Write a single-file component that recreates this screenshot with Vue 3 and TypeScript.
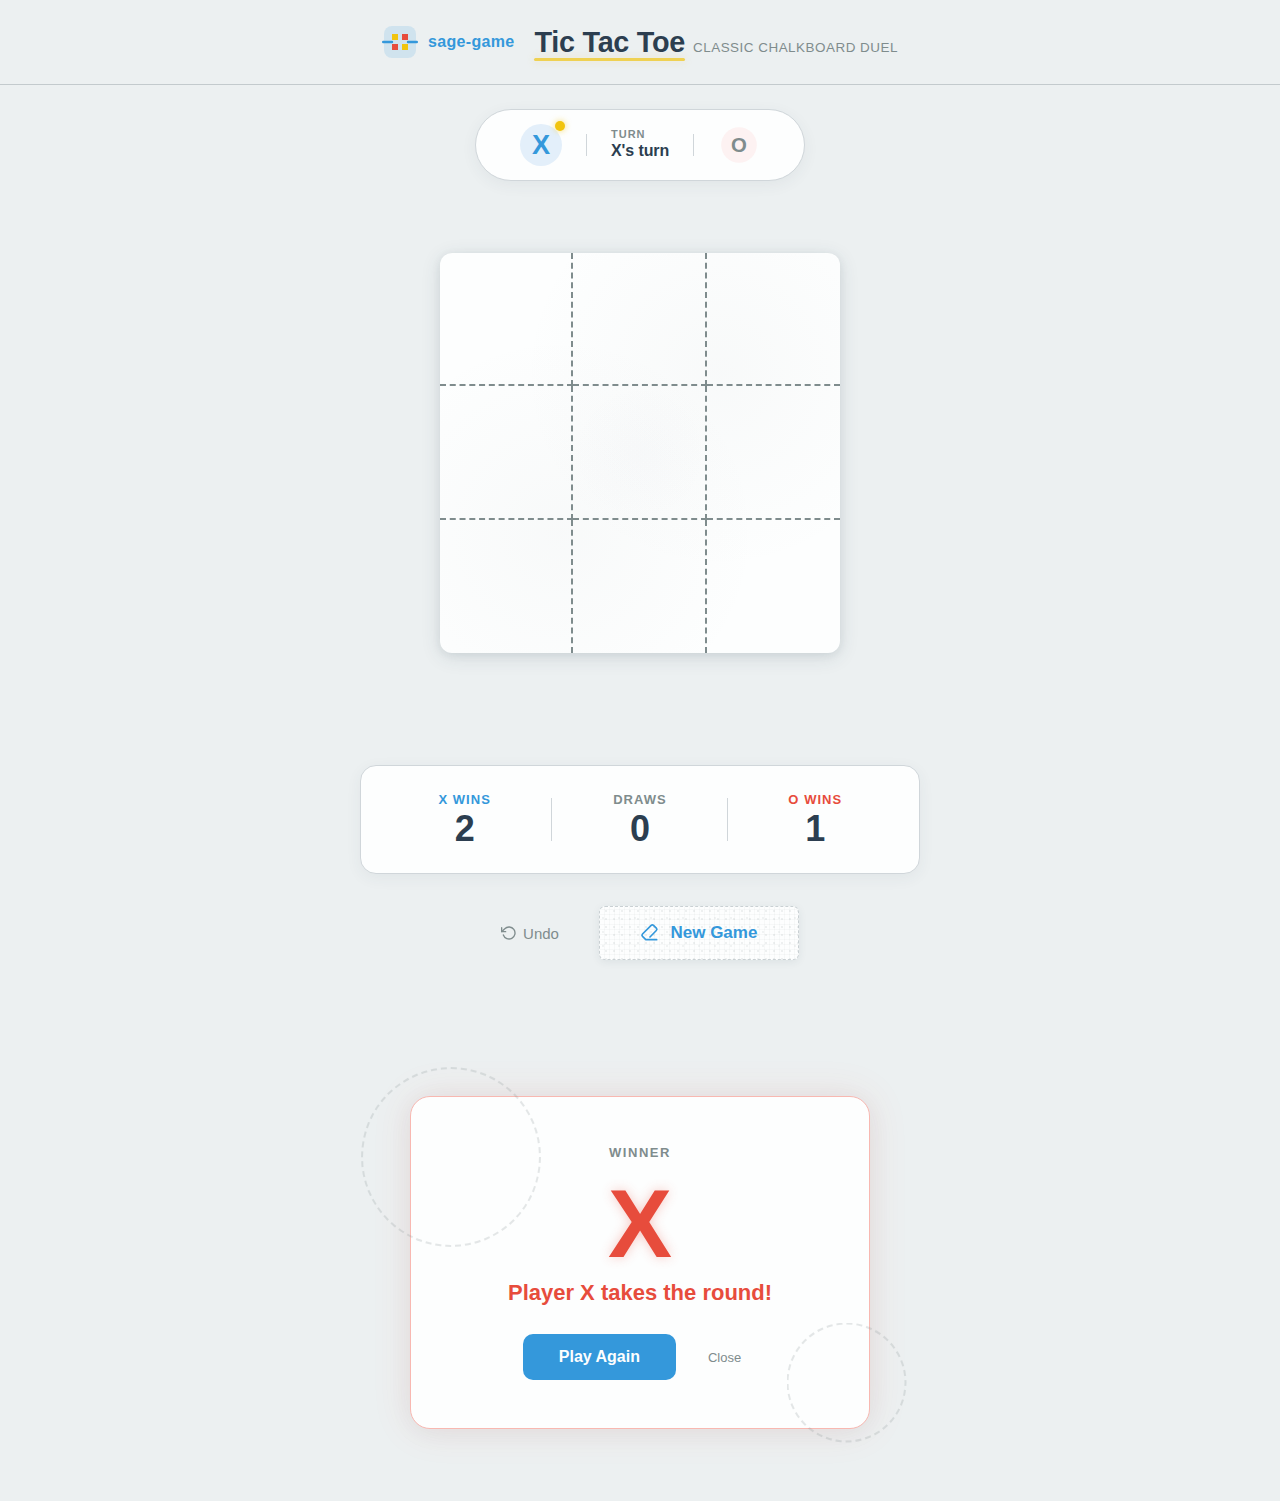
<template>
  <div class="page">
    <header class="header">
      <div class="brand">
        <svg class="brand__logo" viewBox="0 0 36 36" fill="none">
          <rect x="2" y="2" width="32" height="32" rx="8" fill="#3498db" fill-opacity="0.15" />
          <path d="M10 10h6v6h-6zM20 20h6v6h-6z" fill="#f1c40f" />
          <path d="M20 10h6v6h-6zM10 20h6v6h-6z" fill="#e74c3c" />
          <path d="M1.2 18H10M26 18h8.8" stroke="#3498db" stroke-width="2.4" stroke-linecap="round" />
        </svg>
        <span class="brand__name">sage-game</span>
      </div>
      <div class="heading">
        <h1 class="heading__title">Tic Tac Toe</h1>
        <span class="heading__sub">Classic chalkboard duel</span>
      </div>
    </header>

    <main class="main">
      <section class="turn">
        <div :class="['turn__mark', 'turn__mark--x', { 'turn__mark--active': current === 'X' }]">X</div>
        <span class="turn__divider"></span>
        <div class="turn__info">
          <span class="turn__label">Turn</span>
          <span class="turn__text">{{ current }}'s turn</span>
        </div>
        <span class="turn__divider"></span>
        <div :class="['turn__mark', 'turn__mark--o', { 'turn__mark--active': current === 'O' }]">O</div>
      </section>

      <section class="board">
        <button
          v-for="(cell, index) in cells"
          :key="index"
          :class="['board__cell', { [`board__cell--${cell.toLowerCase()}`]: cell }]"
          @click="play(index)"
        >
          {{ cell }}
        </button>
      </section>

      <section class="score">
        <div v-for="item in scores" :key="item.id" :class="['score__item', `score__item--${item.id}`]">
          <span class="score__label">{{ item.label }}</span>
          <span class="score__value">{{ item.value }}</span>
        </div>
      </section>

      <div class="actions">
        <button class="undo" @click="undo">
          <svg class="undo__icon" viewBox="0 0 24 24">
            <path d="M1 4v6h6" />
            <path d="M3.51 15a9 9 0 1 0 2.13-9.36L1 10" />
          </svg>
          Undo
        </button>
        <button class="new-game" @click="reset">
          <svg class="new-game__icon" viewBox="0 0 24 24">
            <path d="M20 20H7L3 16a2 2 0 0 1 0-2.8L13.4 2.8a2 2 0 0 1 2.8 0L19.6 6.2a2 2 0 0 1 0 2.8L12 16.8" />
          </svg>
          New Game
        </button>
      </div>

      <section v-if="showResult" class="result">
        <span class="result__label">Winner</span>
        <span class="result__mark">X</span>
        <p class="result__text">Player X takes the round!</p>
        <div class="result__actions">
          <button class="result__play" @click="reset">Play Again</button>
          <button class="result__close" @click="showResult = false">Close</button>
        </div>
        <span class="result__ring result__ring--lg"></span>
        <span class="result__ring result__ring--sm"></span>
      </section>
    </main>
  </div>
</template>

<script lang="ts" setup>
import { ref } from 'vue';

type TMark = 'X' | 'O';
type TScore = { id: string; label: string; value: number };

const current = ref<TMark>('X');
const cells = ref<(TMark | '')[]>(Array(9).fill(''));
const moves = ref<number[]>([]);
const showResult = ref(true);

const scores = ref<TScore[]>([
  { id: 'x', label: 'X wins', value: 2 },
  { id: 'draw', label: 'Draws', value: 0 },
  { id: 'o', label: 'O wins', value: 1 }
]);

const swap = () => {
  current.value = current.value === 'X' ? 'O' : 'X';
};

const play = (index: number) => {
  if (!cells.value[index]) {
    cells.value[index] = current.value;
    moves.value.push(index);
    swap();
  }
};

const undo = () => {
  const last = moves.value.pop();
  if (last !== undefined) {
    cells.value[last] = '';
    swap();
  }
};

const reset = () => {
  cells.value = Array(9).fill('');
  moves.value = [];
  current.value = 'X';
};
</script>

<style>
body {
  background-color: #ecf0f1;
}
</style>

<style scoped>
.page {
  min-height: 1501px;
  background-color: #ecf0f1;
  color: #2c3e50;
  font-family: 'Liberation Sans', Arial, sans-serif;
}

button {
  padding: 0;
  border: none;
  background: none;
  font-family: inherit;
  cursor: pointer;
}

/* HEADER */
.header {
  display: flex;
  justify-content: center;
  align-items: center;
  gap: 20px;
  box-sizing: border-box;
  height: 85px;
  border-bottom: 1px solid #c3cacd;
}
.brand {
  display: flex;
  align-items: center;
  gap: 10px;
}
.brand__logo {
  width: 36px;
  height: 36px;
}
.brand__name {
  color: #3498db;
  font-size: 16px;
  font-weight: 700;
  letter-spacing: 0.32px;
}
.heading {
  display: flex;
  align-items: baseline;
  gap: 8px;
}
.heading__title {
  position: relative;
  margin: 0;
  font-size: 28.8px;
  font-weight: 700;
  line-height: 36px;
  letter-spacing: -0.01em;
}
.heading__title::after {
  content: '';
  position: absolute;
  left: -0.5px;
  right: 0;
  bottom: -1px;
  height: 3px;
  border-radius: 2px;
  background-color: #f1c40f;
  box-shadow: 0 0 8px rgba(241, 196, 15, 0.3);
  opacity: 0.7;
}
.heading__sub {
  color: #7f8c8d;
  font-size: 13.44px;
  letter-spacing: 0.5px;
  text-transform: uppercase;
}

.main {
  display: flex;
  flex-direction: column;
  align-items: center;
  padding-top: 24px;
}

/* TURN */
.turn {
  display: flex;
  align-items: center;
  gap: 24px;
  padding: 14px 44px;
  border: 1px solid #d0d6da;
  border-radius: 36px;
  background-color: #fdfefe;
  box-shadow: 0 4px 16px rgba(44, 62, 80, 0.06);
}
.turn__mark {
  position: relative;
  display: flex;
  justify-content: center;
  align-items: center;
  width: 42px;
  height: 42px;
  border-radius: 50%;
  color: #7f8c8d;
  font-size: 24px;
  font-weight: 700;
  transform: scale(0.85);
}
.turn__mark--x {
  background-color: #e3effa;
}
.turn__mark--o {
  background-color: #fdf2f2;
}
.turn__mark--active {
  color: #3498db;
  font-size: 27.2px;
  transform: none;
}
.turn__mark--active::after {
  content: '';
  position: absolute;
  top: -3px;
  right: -3px;
  width: 10px;
  height: 10px;
  border-radius: 50%;
  background-color: #f1c40f;
  box-shadow: 0 0 6px rgba(241, 196, 15, 0.6);
}
.turn__divider {
  width: 1px;
  height: 22px;
  background-color: #d0d6da;
}
.turn__info {
  display: flex;
  flex-direction: column;
  width: 58px;
  padding-bottom: 2px;
  white-space: nowrap;
}
.turn__label {
  color: #7f8c8d;
  font-size: 11px;
  font-weight: 700;
  line-height: 13px;
  letter-spacing: 1px;
  text-transform: uppercase;
}
.turn__text {
  font-size: 16px;
  font-weight: 700;
  line-height: 20px;
  letter-spacing: -0.1px;
}

/* BOARD */
.board {
  display: grid;
  grid-template-columns: repeat(3, 1fr);
  grid-template-rows: repeat(3, 1fr);
  width: 400px;
  height: 400px;
  margin-top: 72px;
  border-radius: 12px;
  overflow: hidden;
  background:
    radial-gradient(circle at 30% 70%, rgba(127, 140, 141, 0.04), transparent 50%),
    radial-gradient(circle at 70% 30%, rgba(127, 140, 141, 0.04), transparent 50%),
    radial-gradient(circle at 50% 50%, rgba(110, 110, 170, 0.015), transparent 25%),
    #fdfefe;
  box-shadow:
    0 4px 20px rgba(44, 62, 80, 0.12),
    0 2px 8px rgba(44, 62, 80, 0.08);
}
.board__cell {
  border: 0 dashed #7f8c8d;
  border-right-width: 2px;
  border-bottom-width: 2px;
  font-size: 64px;
  font-weight: 700;
}
.board__cell:nth-child(3n) {
  border-right-width: 0;
}
.board__cell:nth-child(n + 7) {
  border-bottom-width: 0;
}
.board__cell--x {
  color: #3498db;
}
.board__cell--o {
  color: #e74c3c;
}

/* SCORE */
.score {
  display: flex;
  align-items: center;
  box-sizing: border-box;
  width: 560px;
  height: 109px;
  margin-top: 112px;
  padding: 0 16px;
  border: 1px solid #d0d6da;
  border-radius: 16px;
  background-color: #fdfefe;
  box-shadow: 0 4px 16px rgba(44, 62, 80, 0.06);
}
.score__item {
  position: relative;
  flex: 1;
  display: flex;
  flex-direction: column;
  align-items: center;
  gap: 4px;
}
.score__item + .score__item::before {
  content: '';
  position: absolute;
  left: -1px;
  top: 50%;
  width: 1px;
  height: 43px;
  margin-top: -21.5px;
  background-color: #d0d6da;
}
.score__label {
  color: #7f8c8d;
  font-size: 13px;
  font-weight: 700;
  line-height: 15px;
  letter-spacing: 1.04px;
  text-transform: uppercase;
}
.score__item--x .score__label {
  color: #3498db;
}
.score__item--o .score__label {
  color: #e74c3c;
}
.score__value {
  font-size: 36px;
  font-weight: 700;
  line-height: 36px;
}

/* ACTIONS */
.actions {
  display: flex;
  align-items: center;
  gap: 20px;
  margin-top: 32px;
}
.undo {
  display: flex;
  align-items: center;
  gap: 6px;
  padding: 10px 20px;
  color: #7f8c8d;
  font-size: 15px;
}
.undo__icon,
.new-game__icon {
  fill: none;
  stroke: currentColor;
  stroke-width: 2;
  stroke-linecap: round;
  stroke-linejoin: round;
}
.undo__icon {
  width: 16px;
  height: 16px;
}
.new-game {
  display: flex;
  justify-content: center;
  align-items: center;
  gap: 10px;
  box-sizing: border-box;
  width: 200px;
  height: 54px;
  border: 1px dashed #c9d0d3;
  border-radius: 6px;
  background-color: #fdfefe;
  /* chalk dust: loose dots over a faint grid */
  background-image:
    radial-gradient(circle at 6px 4px, rgba(127, 140, 141, 0.15) 0.6px, transparent 1.2px),
    radial-gradient(circle at 3px 11px, rgba(127, 140, 141, 0.12) 0.6px, transparent 1.2px),
    repeating-linear-gradient(0deg, transparent 0 4px, rgba(127, 140, 141, 0.05) 4px 5px),
    repeating-linear-gradient(90deg, transparent 0 4px, rgba(127, 140, 141, 0.05) 4px 5px);
  background-size:
    8px 8px,
    16px 14px,
    auto,
    auto;
  box-shadow: 0 2px 8px rgba(44, 62, 80, 0.08);
  color: #3498db;
  font-size: 17px;
  font-weight: 700;
}
.new-game__icon {
  width: 20px;
  height: 20px;
}

/* RESULT */
.result {
  position: relative;
  display: flex;
  flex-direction: column;
  align-items: center;
  box-sizing: border-box;
  width: 460px;
  height: 333px;
  margin-top: 136px;
  padding-top: 48px;
  border: 1px solid #f8b8b1;
  border-radius: 20px;
  background-color: #fdfefe;
  box-shadow:
    0 0 40px rgba(231, 76, 60, 0.1),
    0 4px 24px rgba(44, 62, 80, 0.05);
}
.result__label {
  color: #7f8c8d;
  font-size: 13px;
  font-weight: 700;
  line-height: 15px;
  letter-spacing: 1.56px;
  text-transform: uppercase;
}
.result__mark {
  margin-top: 16px;
  color: #e74c3c;
  font-size: 96px;
  font-weight: 700;
  line-height: 96px;
  text-shadow: 0 0 12px rgba(231, 76, 60, 0.3);
}
.result__text {
  margin: 8px 0 0;
  color: #e74c3c;
  font-size: 22px;
  font-weight: 700;
  line-height: 26px;
}
.result__actions {
  display: flex;
  align-items: center;
  gap: 16px;
  margin-top: 28px;
}
.result__play {
  width: 153px;
  height: 46px;
  border-radius: 10px;
  background-color: #3498db;
  color: #fdfefe;
  font-size: 16px;
  font-weight: 700;
}
.result__close {
  padding: 8px 16px;
  color: #7f8c8d;
  font-size: 13px;
}
.result__ring {
  position: absolute;
  box-sizing: border-box;
  border: 2px dashed #7f8c8d;
  border-radius: 50%;
  opacity: 0.2;
  pointer-events: none;
}
.result__ring--lg {
  top: -30px;
  left: -50px;
  width: 180px;
  height: 180px;
}
.result__ring--sm {
  right: -37px;
  bottom: -14px;
  width: 120px;
  height: 120px;
  transform: translate(0.5px, 0.5px);
}
</style>
